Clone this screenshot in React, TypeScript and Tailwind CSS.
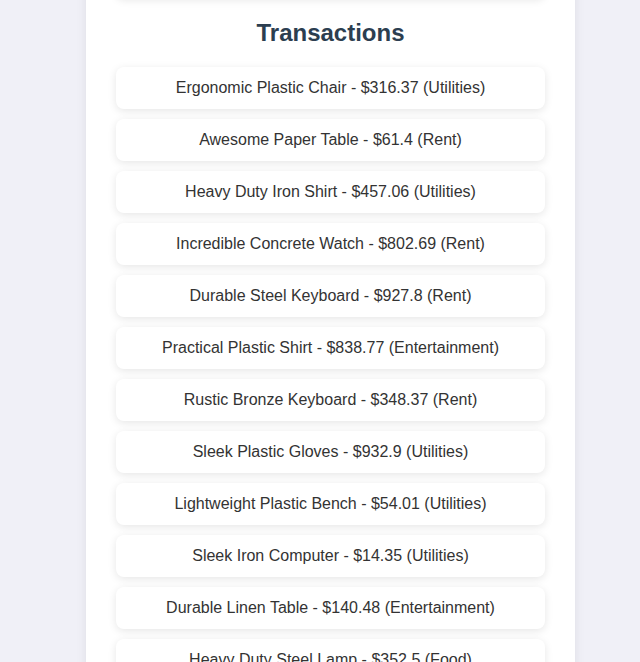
import React from "react";

const items = [
  "Ergonomic Plastic Chair - $316.37 (Utilities)",
  "Awesome Paper Table - $61.4 (Rent)",
  "Heavy Duty Iron Shirt - $457.06 (Utilities)",
  "Incredible Concrete Watch - $802.69 (Rent)",
  "Durable Steel Keyboard - $927.8 (Rent)",
  "Practical Plastic Shirt - $838.77 (Entertainment)",
  "Rustic Bronze Keyboard - $348.37 (Rent)",
  "Sleek Plastic Gloves - $932.9 (Utilities)",
  "Lightweight Plastic Bench - $54.01 (Utilities)",
  "Sleek Iron Computer - $14.35 (Utilities)",
  "Durable Linen Table - $140.48 (Entertainment)",
  "Heavy Duty Steel Lamp - $352.5 (Food)",
];

export default function App() {
  return (
    <div
      className="min-h-screen bg-[#f0f0f7] overflow-hidden"
      style={{ fontFamily: '"Liberation Sans", Arial, sans-serif' }}
    >
      <div className="ml-[86px] w-[489px] bg-white px-[30px] pb-8 shadow-[0_0_10px_rgba(0,0,0,0.08)] min-h-[662px]">
        <div className="-mt-[62px] h-[60px] rounded-lg bg-white shadow-[0_2px_8px_rgba(0,0,0,0.1)]" />
        <h2 className="mt-[21px] mb-[20px] text-center text-[24px] leading-[28px] font-bold text-[#2c3e50]">
          Transactions
        </h2>
        <div className="flex flex-col gap-[10px]">
          {items.map((t) => (
            <div
              key={t}
              className="rounded-lg bg-white py-3 text-center text-[16px] leading-[18px] text-[#333] shadow-[0_2px_8px_rgba(0,0,0,0.1)]"
            >
              {t}
            </div>
          ))}
        </div>
      </div>
    </div>
  );
}
